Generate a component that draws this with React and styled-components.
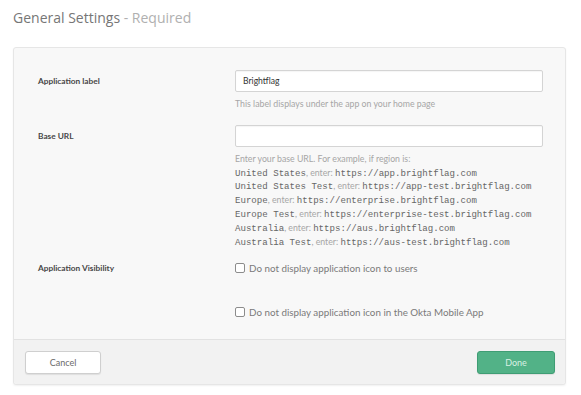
import React, { useState } from 'react';
import styled, { createGlobalStyle } from 'styled-components';

const GlobalStyle = createGlobalStyle`
  html, body {
    margin: 0;
    padding: 0;
    background: #ffffff;
  }
  body {
    font-family: Lato, "Open Sans", Arial, sans-serif;
    -webkit-font-smoothing: antialiased;
  }
`;

const regions = [
  { name: 'United States', url: 'https://app.brightflag.com' },
  { name: 'United States Test', url: 'https://app-test.brightflag.com' },
  { name: 'Europe', url: 'https://enterprise.brightflag.com' },
  { name: 'Europe Test', url: 'https://enterprise-test.brightflag.com' },
  { name: 'Australia', url: 'https://aus.brightflag.com' },
  { name: 'Australia Test', url: 'https://aus-test.brightflag.com' },
];

const App = () => {
  const [label, setLabel] = useState('Brightflag');
  const [baseUrl, setBaseUrl] = useState('');

  return (
    <Page>
      <GlobalStyle />
      <Title>
        General Settings <Muted>- Required</Muted>
      </Title>
      <Card>
        <Body>
          <FieldLabel>Application label</FieldLabel>
          <Field>
            <TextInput value={label} onChange={(e) => setLabel(e.target.value)} />
            <Help>This label displays under the app on your home page</Help>
          </Field>

          <FieldLabel>Base URL</FieldLabel>
          <Field>
            <TextInput value={baseUrl} onChange={(e) => setBaseUrl(e.target.value)} />
            <Help>Enter your base URL. For example, if region is:</Help>
            {regions.map((r) => (
              <Help key={r.name}>
                <Code>{r.name}</Code>, enter: <Code>{r.url}</Code>
              </Help>
            ))}
          </Field>

          <FieldLabel $check>Application Visibility</FieldLabel>
          <Checks>
            <CheckRow>
              <Box type="checkbox" />
              Do not display application icon to users
            </CheckRow>
            <CheckRow>
              <Box type="checkbox" />
              Do not display application icon in the Okta Mobile App
            </CheckRow>
          </Checks>
        </Body>
        <Footer>
          <Button>Cancel</Button>
          <Button $primary>Done</Button>
        </Footer>
      </Card>
    </Page>
  );
};

const Page = styled.div`
  padding: 9px 15px 12px 13px;
  width: 581px;
  box-sizing: border-box;
`;

const Title = styled.h2`
  margin: 0 0 20px 0;
  font-family: "Open Sans", Lato, sans-serif;
  font-size: 14px;
  font-weight: 400;
  color: #767676;
  line-height: 18px;
`;

const Muted = styled.span`
  color: #b0b0b0;
`;

const Card = styled.div`
  background: #f8f8f8;
  border: 1px solid #e6e6e6;
  border-radius: 3px;
  box-shadow: 0 1px 2px rgba(0, 0, 0, 0.06);
`;

const Body = styled.div`
  display: grid;
  grid-template-columns: 197px 308px;
  row-gap: 14px;
  padding: 22px 23px 21px 24px;
`;

const FieldLabel = styled.div`
  font-size: 8.3px;
  font-weight: 700;
  color: #474747;
  line-height: 22px;
  ${({ $check }) => $check && 'line-height: 12px;'}
`;

const Field = styled.div`
  display: flex;
  flex-direction: column;
`;

const TextInput = styled.input`
  box-sizing: border-box;
  width: 308px;
  height: 22px;
  margin-bottom: 5px;
  border: 1px solid #d4d4d4;
  border-radius: 2px;
  background: #fff;
  padding: 0 7px;
  font-family: inherit;
  font-size: 8.6px;
  color: #333;
  box-shadow: inset 0 1px 1px rgba(0, 0, 0, 0.04);
  outline: none;
`;

const Help = styled.div`
  height: 13.8px;
  font-size: 8.75px;
  color: #a6a6a6;
  line-height: 13.8px;
  white-space: nowrap;
`;

const Code = styled.span`
  font-family: "Liberation Mono", "DejaVu Sans Mono", monospace;
  font-size: 9.1px;
  line-height: 1;
  color: #666;
`;

const Checks = styled.div`
  display: flex;
  flex-direction: column;
  gap: 32px;
`;

const CheckRow = styled.label`
  display: flex;
  align-items: center;
  gap: 4px;
  font-size: 9.8px;
  color: #7a7a7a;
  line-height: 12px;
`;

const Box = styled.input`
  appearance: none;
  margin: 0;
  width: 10px;
  height: 10px;
  border: 1px solid #8c8c8c;
  border-radius: 2px;
  background: #fff;
  box-sizing: border-box;
`;

const Footer = styled.div`
  display: flex;
  justify-content: space-between;
  align-items: center;
  padding: 11px 10px 10px 11px;
  background: #f2f2f2;
  border-top: 1px solid #e2e2e2;
  border-radius: 0 0 3px 3px;
`;

const Button = styled.button`
  width: ${({ $primary }) => ($primary ? '78px' : '76px')};
  height: 23px;
  border-radius: 3px;
  font-family: inherit;
  font-size: 9px;
  cursor: pointer;
  border: 1px solid ${({ $primary }) => ($primary ? '#3f9d74' : '#cfcfcf')};
  background: ${({ $primary }) => ($primary ? '#52b287' : '#ffffff')};
  color: ${({ $primary }) => ($primary ? '#d9f0e4' : '#6a6a6a')};
  box-shadow: 0 1px 1px rgba(0, 0, 0, 0.08);
`;

export default App;
